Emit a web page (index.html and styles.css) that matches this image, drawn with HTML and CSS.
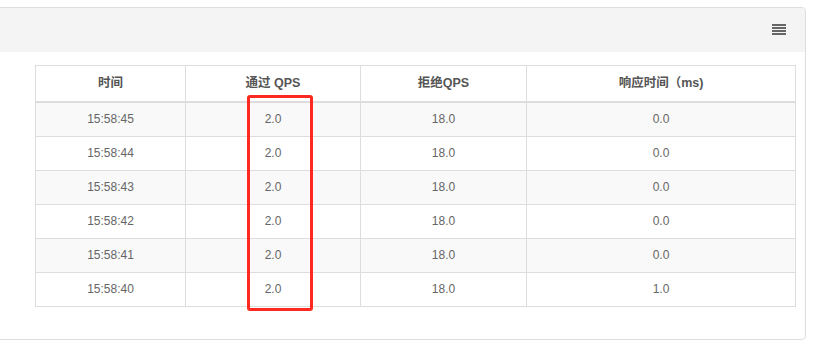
FILE: index.html
```html
<!DOCTYPE html>
<html lang="zh">
<head>
<meta charset="utf-8">
<link rel="stylesheet" href="styles.css">
</head>
<body>
<div class="panel">
  <div class="panel-heading">
    <span class="menu-icon"><i></i><i></i><i></i><i></i></span>
  </div>
  <div class="panel-body">
    <table class="metrics">
      <colgroup>
        <col class="c1"><col class="c2"><col class="c3"><col class="c4">
      </colgroup>
      <thead>
        <tr><th>时间</th><th>通过 QPS</th><th>拒绝QPS</th><th>响应时间（ms)</th></tr>
      </thead>
      <tbody>
        <tr><td>15:58:45</td><td>2.0</td><td>18.0</td><td>0.0</td></tr>
        <tr><td>15:58:44</td><td>2.0</td><td>18.0</td><td>0.0</td></tr>
        <tr><td>15:58:43</td><td>2.0</td><td>18.0</td><td>0.0</td></tr>
        <tr><td>15:58:42</td><td>2.0</td><td>18.0</td><td>0.0</td></tr>
        <tr><td>15:58:41</td><td>2.0</td><td>18.0</td><td>0.0</td></tr>
        <tr><td>15:58:40</td><td>2.0</td><td>18.0</td><td>1.0</td></tr>
      </tbody>
    </table>
  </div>
</div>
<div class="highlight"></div>
</body>
</html>
```
FILE: styles.css
```css
html, body {
  margin: 0;
  padding: 0;
  background: #fff;
  font-family: "Liberation Sans", Arial, "Noto Sans CJK SC", sans-serif;
  font-size: 12px;
  color: #666;
}
body {
  padding-top: 7px;
  overflow: hidden;
}
.panel {
  margin: 0 9px 0 -10px;
  border: 1px solid #ddd;
  border-radius: 4px;
  background: #fff;
}
.panel-heading {
  height: 44px;
  background: #f4f4f4;
  border-top-right-radius: 3px;
  display: flex;
  align-items: center;
  justify-content: flex-end;
  padding-right: 19px;
}
.menu-icon {
  display: flex;
  flex-direction: column;
  gap: 1px;
  width: 14px;
  margin-top: -1px;
}
.menu-icon i {
  display: block;
  height: 2px;
  background: #666;
}
.panel-body {
  padding: 13px 10px 32px 44px;
}
.metrics {
  width: 760px;
  border-collapse: collapse;
  border: 1px solid #ddd;
  table-layout: fixed;
}
.c1 { width: 150px; }
.c2 { width: 175px; }
.c3 { width: 166px; }
.c4 { width: 269px; }
.metrics th, .metrics td {
  border: 1px solid #ddd;
  text-align: center;
  padding: 8px;
  line-height: 17px;
  font-weight: normal;
}
.metrics th {
  font-weight: bold;
  font-size: 12.5px;
  color: #555;
  padding: 9px 8px 9px;
  border-bottom: 2px solid #ddd;
}
.metrics tbody tr:nth-child(odd) {
  background: #f9f9f9;
}
.highlight {
  position: absolute;
  left: 247px;
  top: 95px;
  width: 60px;
  height: 210px;
  border: 3px solid #fe2a22;
  border-radius: 3px;
}
```
